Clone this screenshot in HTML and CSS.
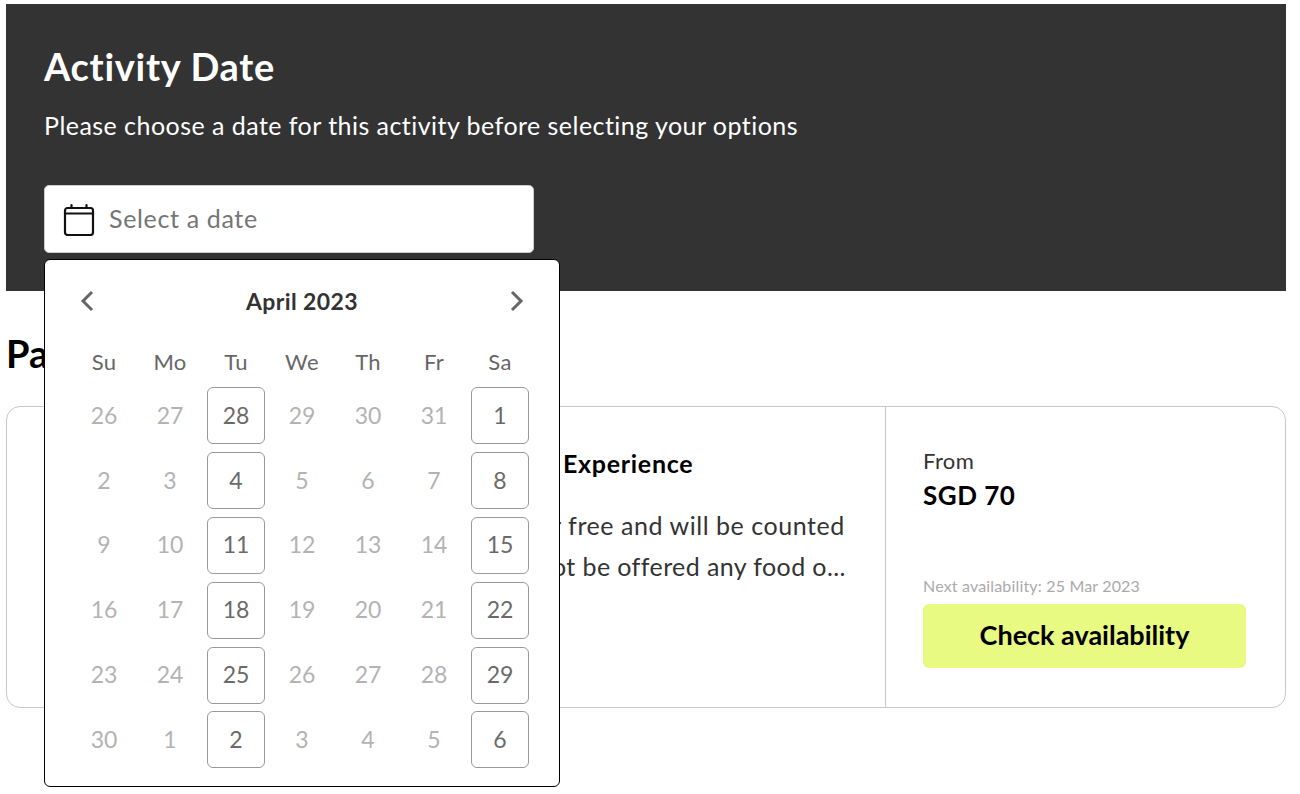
FILE: index.html
```html
<!DOCTYPE html>
<html lang="en">
<head>
<meta charset="utf-8">
<title>Activity Date</title>
<link rel="stylesheet" href="styles.css">
</head>
<body>
<section class="hero">
  <h1 class="hero-title">Activity Date</h1>
  <p class="hero-sub">Please choose a date for this activity before selecting your options</p>
  <div class="date-wrap">
    <div class="date-input">
      <svg class="cal-icon" viewBox="0 0 32 34" width="32" height="34" fill="none" stroke="#111" stroke-width="2.2" stroke-linecap="round" stroke-linejoin="round" aria-hidden="true">
        <rect x="2" y="6" width="28" height="27" rx="2.5"/>
        <path d="M2 11.5H30M8.5 3V6M23.5 3V6"/>
      </svg>
      <span class="placeholder">Select a date</span>
    </div>
    <div class="calendar">
      <div class="cal-head">
        <svg class="chev" viewBox="0 0 16 22" width="16" height="22" fill="none" stroke="#666" stroke-width="3" aria-hidden="true"><path d="M13 2L4 11L13 20"/></svg>
        <span class="cal-month">April 2023</span>
        <svg class="chev" viewBox="0 0 16 22" width="16" height="22" fill="none" stroke="#666" stroke-width="3" aria-hidden="true"><path d="M3 2L12 11L3 20"/></svg>
      </div>
      <div class="cal-grid">
        <span class="wd">Su</span><span class="wd">Mo</span><span class="wd">Tu</span><span class="wd">We</span><span class="wd">Th</span><span class="wd">Fr</span><span class="wd">Sa</span>
        <span class="d">26</span><span class="d">27</span><span class="d on">28</span><span class="d">29</span><span class="d">30</span><span class="d">31</span><span class="d on">1</span>
        <span class="d">2</span><span class="d">3</span><span class="d on">4</span><span class="d">5</span><span class="d">6</span><span class="d">7</span><span class="d on">8</span>
        <span class="d">9</span><span class="d">10</span><span class="d on">11</span><span class="d">12</span><span class="d">13</span><span class="d">14</span><span class="d on">15</span>
        <span class="d">16</span><span class="d">17</span><span class="d on">18</span><span class="d">19</span><span class="d">20</span><span class="d">21</span><span class="d on">22</span>
        <span class="d">23</span><span class="d">24</span><span class="d on">25</span><span class="d">26</span><span class="d">27</span><span class="d">28</span><span class="d on">29</span>
        <span class="d">30</span><span class="d">1</span><span class="d on">2</span><span class="d">3</span><span class="d">4</span><span class="d">5</span><span class="d on">6</span>
      </div>
    </div>
  </div>
</section>
<h2 class="section-title">Pa</h2>
<article class="card">
  <div class="card-main">
    <h3 class="card-title">Experience</h3>
    <p class="card-line">r free and will be counted</p>
    <p class="card-line tight">ot be offered any food o...</p>
  </div>
  <aside class="card-side">
    <div class="from">From</div>
    <div class="price">SGD 70</div>
    <div class="next">Next availability: 25 Mar 2023</div>
    <button class="check" type="button">Check availability</button>
  </aside>
</article>
</body>
</html>
```
FILE: styles.css
```css
* { box-sizing: border-box; }
html, body { height: 100%; }
body {
  margin: 0;
  padding: 4px 14px 0 6px;
  background: #fff;
  font-family: "Lato", "Noto Sans", sans-serif;
  color: #333;
  overflow: hidden;
}
.hero {
  height: 287px;
  background: #333;
  padding: 39px 38px 0;
  color: #fff;
}
.hero-title {
  margin: 0;
  font-size: 38px;
  line-height: 46px;
  font-weight: 700;
  letter-spacing: 0.7px;
}
.hero-sub {
  margin: 20px 0 0;
  font-size: 25px;
  line-height: 32px;
  letter-spacing: 0.46px;
}
.date-wrap { position: relative; margin-top: 44px; width: 490px; }
.date-input {
  height: 68px;
  background: #fff;
  border: 1px solid #ccc;
  border-radius: 5px;
  display: flex;
  align-items: center;
  padding-left: 18px;
  gap: 14px;
}
.placeholder { font-size: 25px; line-height: 30px; color: #757575; letter-spacing: 0.65px; margin-top: -2px; }
.calendar {
  position: absolute;
  left: 0;
  top: 74px;
  width: 516px;
  height: 528px;
  background: #fff;
  border: 1px solid #000;
  border-radius: 6px;
  color: #333;
  padding: 0 26px;
  z-index: 2;
}
.cal-head {
  height: 82px;
  display: flex;
  align-items: center;
  justify-content: space-between;
  padding: 0 7.5px;
}
.cal-month { font-size: 23px; font-weight: 700; color: #333; letter-spacing: 0.4px; }
.cal-grid {
  display: grid;
  grid-template-columns: repeat(7, 66px);
  grid-template-rows: 38px repeat(6, 64.8px);
  justify-items: center;
  align-items: center;
}
.wd { font-size: 22px; color: #666; letter-spacing: 0.3px; }
.d {
  width: 58px;
  height: 57px;
  display: flex;
  align-items: center;
  justify-content: center;
  font-size: 23px;
  color: #b3b3b3;
  border: 1px solid transparent;
  border-radius: 6px;
  padding-bottom: 2px;
  margin-top: 7px;
}
.d.on { color: #6a6a6a; border-color: #999; }
.section-title {
  margin: 39px 0 0;
  font-size: 38px;
  line-height: 46px;
  font-weight: 700;
  color: #000;
}
.card {
  margin-top: 30px;
  height: 302px;
  border: 1px solid #c8c8c8;
  border-radius: 14px;
  display: flex;
}
.card-main {
  width: 879px;
  padding: 40px 0 0 545px;
  border-right: 1px solid #c8c8c8;
  white-space: nowrap;
  overflow: hidden;
}
.card-title {
  margin: 0 0 26px 11px;
  font-size: 25px;
  line-height: 32px;
  font-weight: 700;
  color: #000;
  letter-spacing: 0.7px;
}
.card-line {
  margin: 0;
  font-size: 25px;
  line-height: 41px;
  color: #333;
  letter-spacing: 0.55px;
}
.card-line.tight { letter-spacing: 0.4px; }
.card-side {
  flex: 1;
  padding: 40px 39px 39px 37px;
  display: flex;
  flex-direction: column;
}
.from { font-size: 22px; line-height: 27px; color: #333; letter-spacing: 0.4px; }
.price { font-size: 26px; line-height: 36px; font-weight: 700; color: #000; margin-top: 3px; letter-spacing: 0.5px; }
.next { margin-top: auto; font-size: 16px; line-height: 21px; color: #aaa; letter-spacing: 0.17px; margin-bottom: 2px; }
.check {
  margin-top: 6px;
  height: 64px;
  padding: 0 0 3px;
  border: 0;
  border-radius: 6px;
  background: #e8fa82;
  font: 700 27px "Lato", sans-serif;
  color: #000;
  width: 323px;
}
```
